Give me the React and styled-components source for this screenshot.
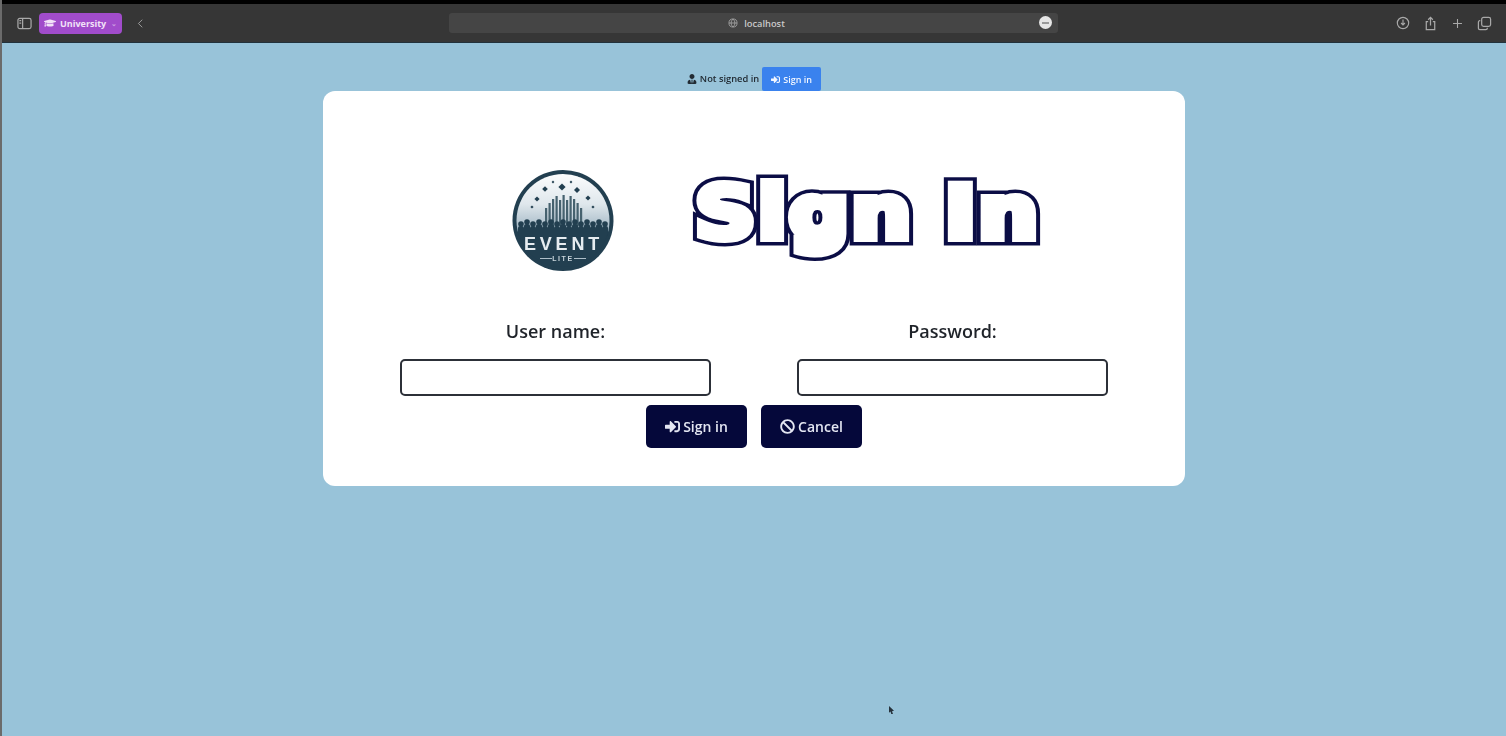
import React from "react";
import styled, { createGlobalStyle } from "styled-components";
import { FaBan, FaGraduationCap, FaSignInAlt, FaUserTie } from "react-icons/fa";

const GlobalStyle = createGlobalStyle`
    html, body {
        margin: 0;
        padding: 0;
        height: 100%;
        overflow: hidden;
        background-color: #98c3d9;
    }
    #root {
        height: 100%;
    }
`;

const Page = styled.div`
    display: flex;
    flex-direction: column;
    height: 736px;
    border-left: 2px solid #6b6b6b;
    box-sizing: border-box;
    font-family: "Open Sans", "Noto Sans", sans-serif;
    /* the reference is a soft, scaled-down capture */
    filter: blur(0.6px);
`;

const Toolbar = styled.header`
    display: flex;
    align-items: center;
    height: 38px;
    padding: 0 14px 0 15px;
    background-color: #363636;
    border-top: 4px solid #000;
    border-bottom: 1px solid #22323c;
`;

const ToolbarLeft = styled.div`
    display: flex;
    align-items: center;
    gap: 7px;
    width: 432px;
`;

const ToolIcon = styled.svg`
    width: ${(props) => props.size || 15}px;
    height: ${(props) => props.size || 15}px;
    fill: none;
    stroke: #a9a9a9;
    stroke-width: 1.3;
    flex: none;
`;

const Profile = styled.div`
    display: flex;
    align-items: center;
    gap: 4px;
    height: 21px;
    margin-right: 6px;
    padding: 0 5px;
    border-radius: 4px;
    background-color: #a14ccb;
    color: #f2e2f8;
    font-size: 9px;
    font-weight: 700;
    width: 83px;
    box-sizing: border-box;
`;

const Caret = styled.span`
    margin-left: auto;
    color: #c99ae0;
    font-size: 7px;
`;

const UrlBar = styled.div`
    display: flex;
    align-items: center;
    justify-content: center;
    gap: 6px;
    position: relative;
    width: 609px;
    height: 20px;
    box-sizing: border-box;
    padding-left: 6px;
    background-color: #454545;
    border-radius: 3px;
    color: #c9c9c9;
    font-size: 9.3px;
    font-weight: 600;
`;

const StopBadge = styled.span`
    position: absolute;
    right: 6px;
    top: 3px;
    display: flex;
    align-items: center;
    justify-content: center;
    width: 13px;
    height: 13px;
    border-radius: 50%;
    background-color: #e6e6e6;

    &::after {
        content: "";
        width: 7px;
        height: 2px;
        background-color: #9a9a9a;
    }
`;

const ToolbarRight = styled.div`
    display: flex;
    align-items: center;
    gap: 13px;
    margin-left: auto;
`;

const Main = styled.main`
    display: flex;
    flex-direction: column;
    align-items: center;
    flex: 1;
    padding-top: 24px;
`;

const AuthBar = styled.div`
    display: flex;
    align-items: center;
    gap: 3px;
    height: 24px;
    padding-bottom: 1px;
    box-sizing: border-box;
    color: #222b33;
    font-size: 9.3px;
    font-weight: 600;
`;

const SmallButton = styled.button`
    display: flex;
    align-items: center;
    justify-content: center;
    gap: 3px;
    width: 59px;
    height: 24px;
    margin-bottom: -1px;
    padding: 0;
    border: none;
    border-radius: 2px;
    background-color: #3a82ee;
    color: #f2f6ff;
    font-family: inherit;
    font-size: 9px;
    font-weight: 600;
`;

const Card = styled.section`
    width: 862px;
    height: 395px;
    box-sizing: border-box;
    padding-top: 79px;
    background-color: #fff;
    border-radius: 12px;
`;

const CardHeader = styled.div`
    display: flex;
    align-items: flex-start;
    gap: 81px;
    height: 102px;
    padding-left: 189px;
`;

const Logo = styled.svg`
    width: 102px;
    height: 102px;
    flex: none;
`;

/* navy stroke underneath, fat white copy on top: gives the merged block letters */
const Title = styled.h1`
    position: relative;
    margin: -13px 0 0;
    font-family: "DejaVu Sans", sans-serif;
    font-size: 73px;
    font-weight: 700;
    line-height: 112px;
    letter-spacing: 2px;
    white-space: nowrap;
    color: #0b0d45;
    -webkit-text-stroke: 15px #0b0d45;
    transform: scaleX(1.15);
    transform-origin: left center;

    &::after {
        content: attr(data-text);
        position: absolute;
        left: 0;
        top: 0;
        color: #fff;
        -webkit-text-stroke: 8px #fff;
    }
`;

const Fields = styled.div`
    display: flex;
    justify-content: center;
    gap: 86px;
    margin-top: 47px;
`;

const Field = styled.label`
    display: flex;
    flex-direction: column;
    align-items: center;
    gap: 16px;
    color: #1f2329;
    font-size: 18px;
    font-weight: 600;
    line-height: 24px;
`;

const TextInput = styled.input`
    width: 311px;
    height: 37px;
    box-sizing: border-box;
    border: 2px solid #2c3038;
    border-radius: 5px;
    background-color: #fff;
`;

const Actions = styled.div`
    display: flex;
    justify-content: center;
    gap: 14px;
    margin-top: 9px;
`;

const ActionButton = styled.button`
    display: flex;
    align-items: center;
    justify-content: center;
    gap: 3px;
    width: 101px;
    height: 43px;
    padding: 0;
    border: none;
    border-radius: 5px;
    background-color: #05083a;
    color: #e4e6f2;
    font-family: inherit;
    font-size: 14px;
    font-weight: 600;
`;

const Pointer = styled.span`
    position: absolute;
    left: 887px;
    top: 706px;
    width: 5px;
    height: 8px;
    background-color: #26323c;
    clip-path: polygon(0 0, 100% 60%, 60% 65%, 80% 100%, 45% 100%, 30% 70%, 0 85%);
`;

const stars = [
    [50, 17, 3.6],
    [33, 19, 2.8],
    [65, 20, 3],
    [25, 29, 2.6],
    [76, 28, 2.6],
    [41, 12, 1.4],
    [59, 12, 1.4],
    [20, 37, 1.6],
    [81, 37, 1.6],
];

const towers = [
    [33, 38],
    [36.5, 33],
    [40, 29],
    [43.5, 26],
    [47, 30],
    [50.5, 25],
    [54, 30],
    [57.5, 26],
    [61, 29],
    [64.5, 33],
    [68, 38],
];

const crowd = [9, 15, 21, 27, 33, 39, 45, 51, 57, 63, 69, 75, 81, 87, 93];

function EventLogo() {
    return (
        <Logo viewBox="0 0 102 102" role="img" aria-label="Event Lite">
            <defs>
                <linearGradient id="sky" x1="0" y1="0" x2="0" y2="1">
                    <stop offset="0" stopColor="#ffffff" />
                    <stop offset="0.55" stopColor="#dfe7ec" />
                    <stop offset="1" stopColor="#9db3c1" />
                </linearGradient>
                <clipPath id="inner">
                    <circle cx="51" cy="50.5" r="46.5" />
                </clipPath>
            </defs>
            <circle cx="51" cy="50.5" r="50.5" fill="#223f50" />
            <g clipPath="url(#inner)">
                <rect x="0" y="0" width="102" height="62" fill="url(#sky)" />
                {towers.map(([x, y]) => (
                    <rect key={x} x={x} y={y} width="2.2" height={56 - y} fill="#46626f" />
                ))}
                {stars.map(([x, y, r]) => (
                    <path
                        key={`${x}-${y}`}
                        d={`M${x} ${y - r}L${x + r} ${y}L${x} ${y + r}L${x - r} ${y}Z`}
                        fill="#223f50"
                    />
                ))}
                {crowd.map((x, i) => (
                    <g key={x} fill="#223f50">
                        <circle cx={x} cy={i % 2 ? 52 : 54} r="2.8" />
                        <rect x={x - 3} y={i % 2 ? 54 : 56} width="6" height="10" rx="2" />
                    </g>
                ))}
                <rect x="0" y="61" width="102" height="42" fill="#223f50" />
            </g>
            <text
                x="51.5"
                y="80"
                textAnchor="middle"
                fontFamily="Liberation Sans, sans-serif"
                fontWeight="700"
                fontSize="18"
                letterSpacing="3.8"
                fill="#e6ecf0"
            >
                EVENT
            </text>
            <text
                x="51"
                y="91"
                textAnchor="middle"
                fontFamily="Liberation Sans, sans-serif"
                fontWeight="700"
                fontSize="7"
                letterSpacing="1.6"
                fill="#c9d5dc"
            >
                LITE
            </text>
            <path d="M28 88.5H40M62 88.5H74" stroke="#aebfc9" strokeWidth="1" />
        </Logo>
    );
}

export default function App() {
    return (
        <Page>
            <GlobalStyle />
            <Toolbar>
                <ToolbarLeft>
                    <ToolIcon viewBox="0 0 16 16">
                        <rect x="1" y="2.5" width="14" height="11" rx="2" />
                        <path d="M6 2.5v11M2.5 5h2M2.5 7.5h2" />
                    </ToolIcon>
                    <Profile>
                        <FaGraduationCap size={12} />
                        University
                        <Caret>⌄</Caret>
                    </Profile>
                    <ToolIcon viewBox="0 0 16 16" size={11}>
                        <path d="M10.5 2.5L5 8l5.5 5.5" />
                    </ToolIcon>
                </ToolbarLeft>
                <UrlBar>
                    <ToolIcon viewBox="0 0 16 16" size={10}>
                        <circle cx="8" cy="8" r="6.5" />
                        <path d="M1.5 8h13M8 1.5c-4 4-4 9 0 13M8 1.5c4 4 4 9 0 13" />
                    </ToolIcon>
                    localhost
                    <StopBadge />
                </UrlBar>
                <ToolbarRight>
                    <ToolIcon viewBox="0 0 16 16" size={14}>
                        <circle cx="8" cy="8" r="6.5" />
                        <path d="M8 4v6M5.8 8L8 10.2 10.2 8" />
                    </ToolIcon>
                    <ToolIcon viewBox="0 0 16 16" size={15}>
                        <path d="M5.5 6H3.5v8.5h9V6h-2M8 10V1.5M5.5 4L8 1.5 10.5 4" />
                    </ToolIcon>
                    <ToolIcon viewBox="0 0 16 16" size={13}>
                        <path d="M8 2.5v11M2.5 8h11" />
                    </ToolIcon>
                    <ToolIcon viewBox="0 0 16 16" size={15}>
                        <rect x="5" y="1.5" width="9.5" height="9.5" rx="2" />
                        <path d="M3.5 5H3a1.5 1.5 0 0 0-1.5 1.5V13A1.5 1.5 0 0 0 3 14.5h6.5A1.5 1.5 0 0 0 11 13v-.5" />
                    </ToolIcon>
                </ToolbarRight>
            </Toolbar>
            <Main>
                <AuthBar>
                    <FaUserTie size={10} />
                    Not signed in
                    <SmallButton>
                        <FaSignInAlt size={9} />
                        Sign in
                    </SmallButton>
                </AuthBar>
                <Card>
                    <CardHeader>
                        <EventLogo />
                        <Title data-text="Sign In">Sign In</Title>
                    </CardHeader>
                    <Fields>
                        <Field>
                            User name:
                            <TextInput type="text" />
                        </Field>
                        <Field>
                            Password:
                            <TextInput type="password" />
                        </Field>
                    </Fields>
                    <Actions>
                        <ActionButton>
                            <FaSignInAlt size={15} />
                            Sign in
                        </ActionButton>
                        <ActionButton>
                            <FaBan size={15} />
                            Cancel
                        </ActionButton>
                    </Actions>
                </Card>
            </Main>
            <Pointer />
        </Page>
    );
}
